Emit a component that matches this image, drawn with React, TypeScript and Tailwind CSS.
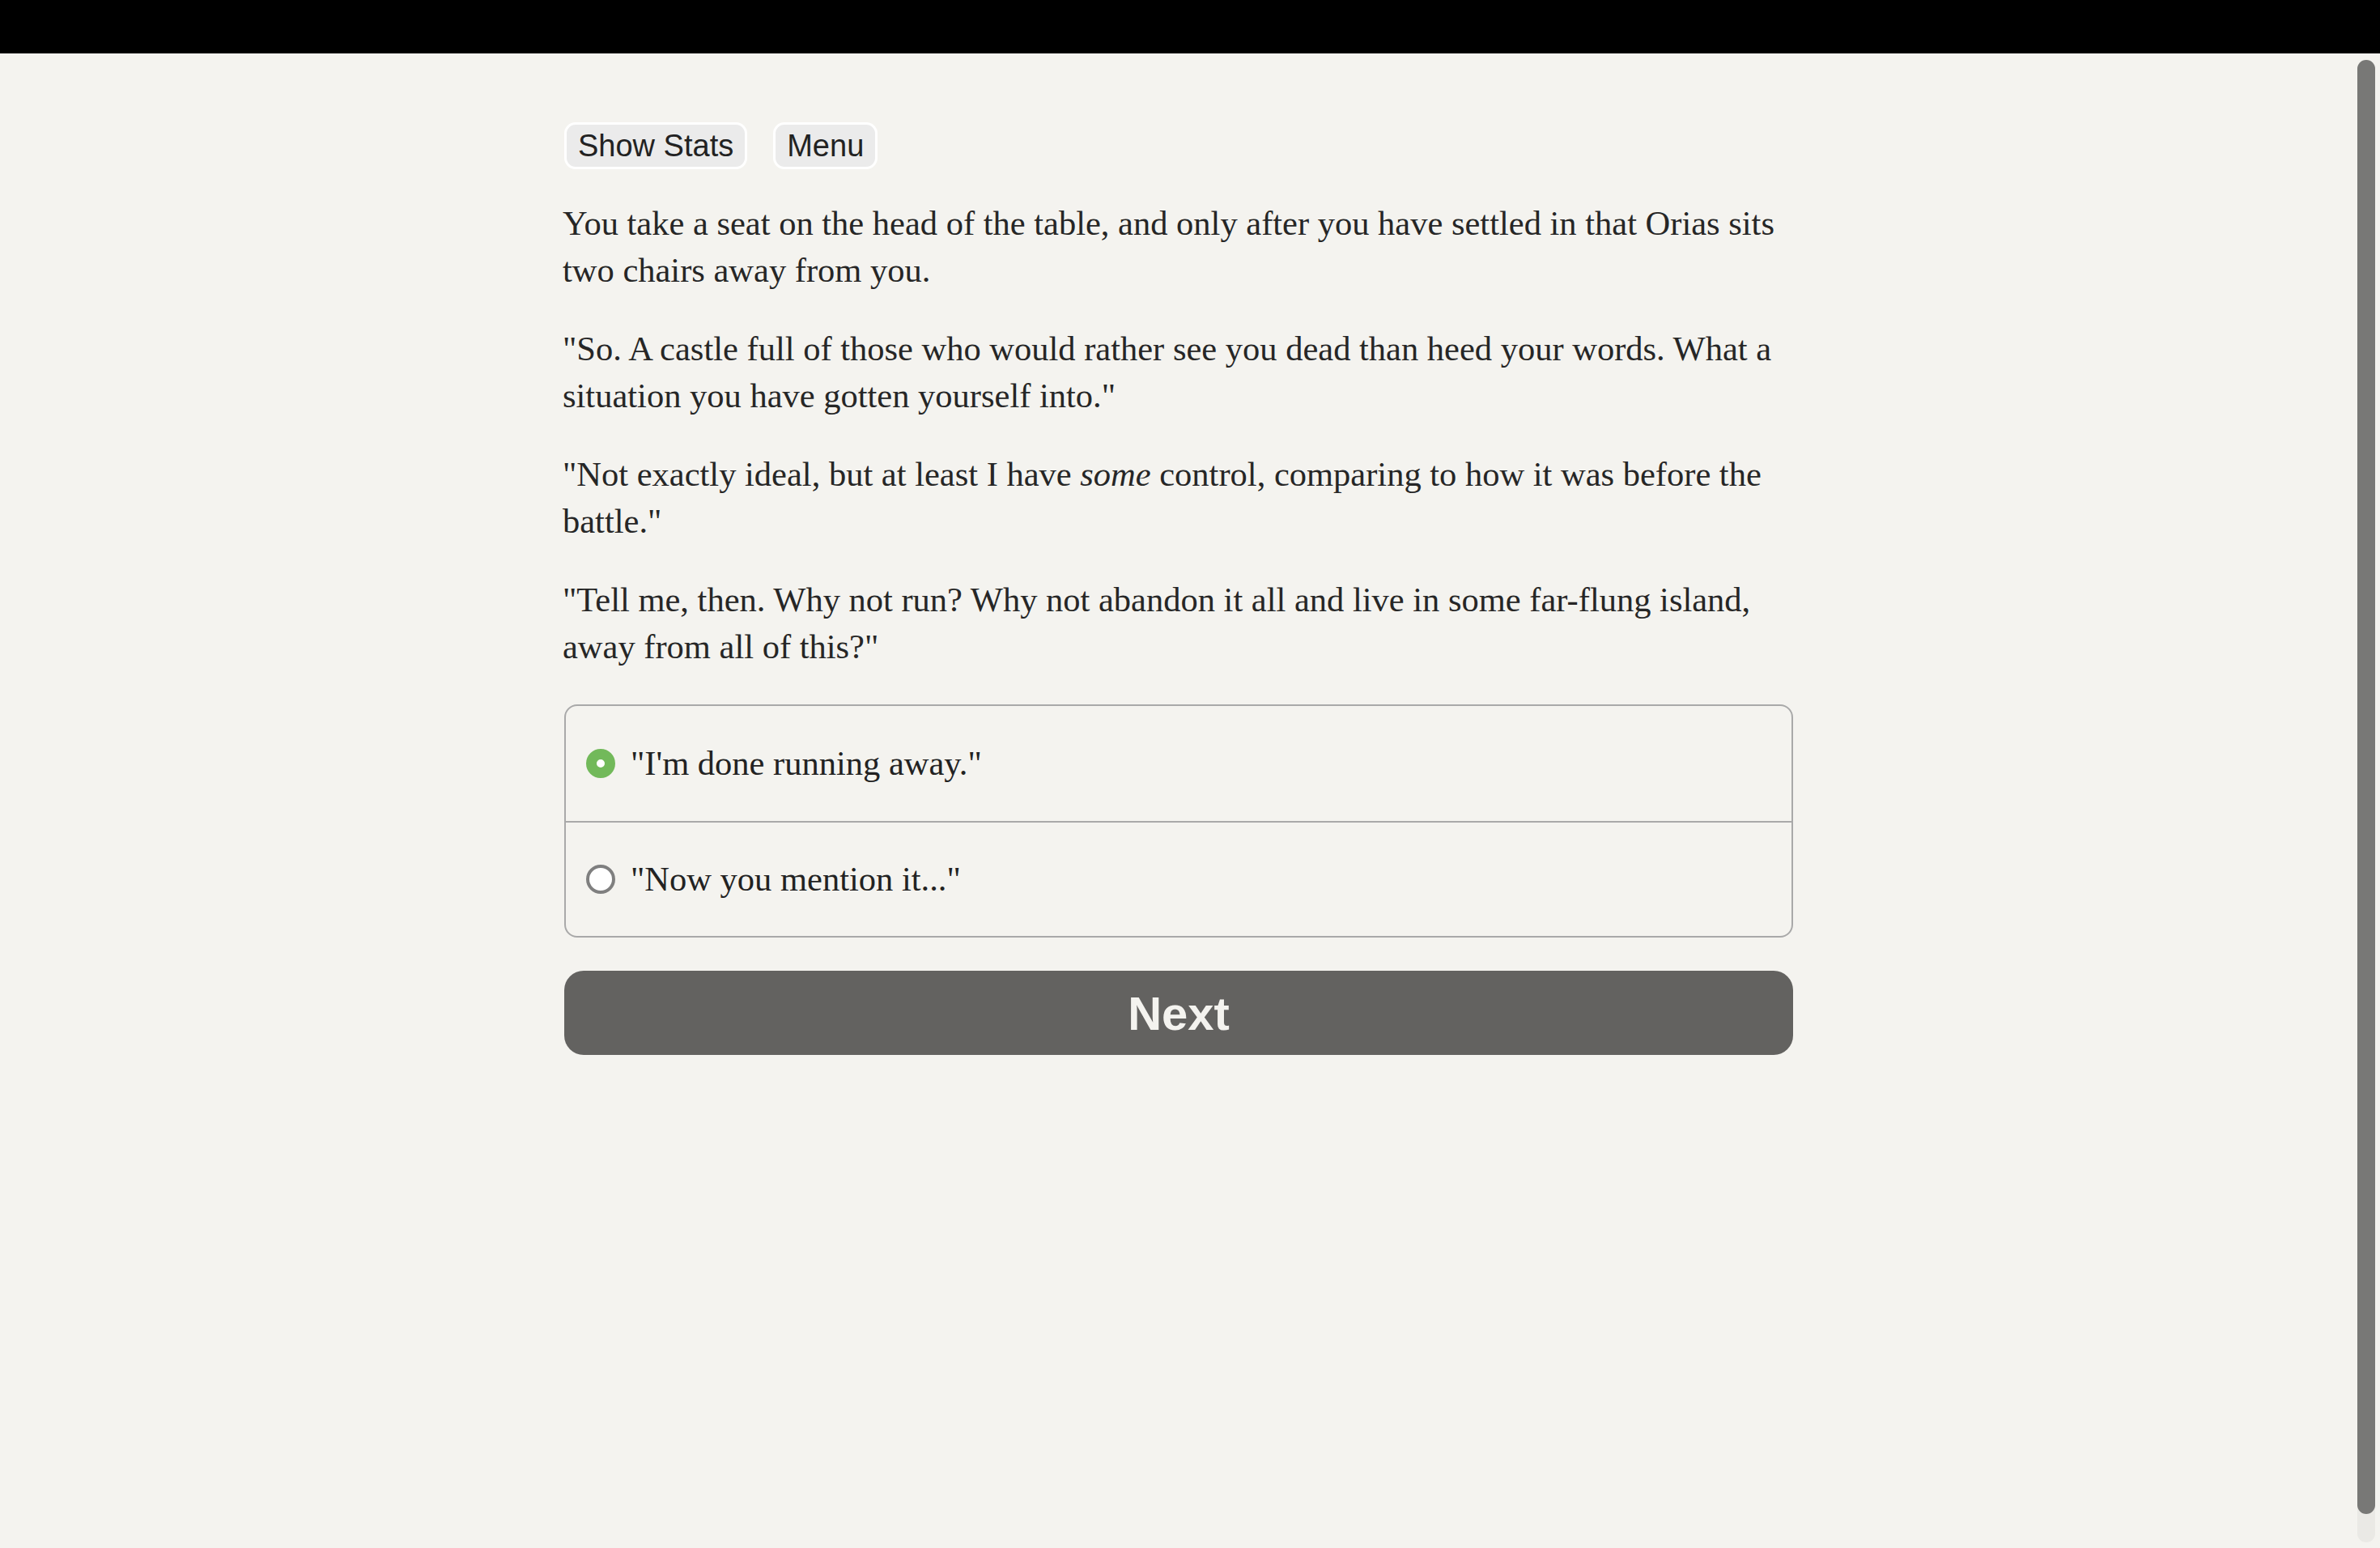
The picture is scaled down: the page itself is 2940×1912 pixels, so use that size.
import { useState } from "react";

const passages = [
  <>You take a seat on the head of the table, and only after you have settled in that Orias sits two chairs away from you.</>,
  <>"So. A castle full of those who would rather see you dead than heed your words. What a situation you have gotten yourself into."</>,
  <>
    "Not exactly ideal, but at least I have <i>some</i> control, comparing to how it was before the battle."
  </>,
  <>"Tell me, then. Why not run? Why not abandon it all and live in some far-flung island, away from all of this?"</>,
];

const choices = ['"I\'m done running away."', '"Now you mention it..."'];

const serif = "font-['Liberation_Serif','Times_New_Roman',serif]";
const sans = "font-['Liberation_Sans',Arial,sans-serif]";

const TopButton = ({ label }: { label: string }) => (
  <button
    className={`flex h-[58px] items-center rounded-[14px] border-[3px] border-white bg-[#ebebeb] px-[14px] text-[38px] leading-none text-[#222] ${sans}`}
  >
    {label}
  </button>
);

const Radio = ({ checked }: { checked: boolean }) =>
  checked ? (
    <span className="block h-9 w-9 shrink-0 rounded-full border-[13px] border-[#72b95a] bg-white" />
  ) : (
    <span className="block h-9 w-9 shrink-0 rounded-full border-4 border-[#7f7f7f] bg-white" />
  );

export default function App() {
  const [selected, setSelected] = useState(0);

  return (
    <div className="flex h-screen flex-col overflow-hidden bg-[#f4f3ef]">
      <div className="h-[66px] shrink-0 bg-black" />

      <div className="flex min-h-0 flex-1">
        <main className="flex-1">
          <div className="mx-auto w-[1520px] pt-[85px]">
            <div className="flex gap-8 pl-[2px]">
              <TopButton label="Show Stats" />
              <TopButton label="Menu" />
            </div>

            <div className={`mt-[38px] flex flex-col gap-[39px] text-[42.5px] leading-[58px] text-[#262626] ${serif}`}>
              {passages.map((p, i) => (
                <p key={i}>{p}</p>
              ))}
            </div>

            <div className="ml-[2px] mt-[42px] overflow-hidden rounded-[16px] border-2 border-[#a9a9a9]">
              {choices.map((c, i) => (
                <label
                  key={c}
                  onClick={() => setSelected(i)}
                  className={`flex h-[142px] cursor-pointer items-center gap-[19px] pl-[25px] text-[42.5px] text-[#222] ${serif} ${
                    i > 0 ? "border-t-2 border-[#a9a9a9]" : ""
                  }`}
                >
                  <Radio checked={selected === i} />
                  <span>{c}</span>
                </label>
              ))}
            </div>

            <button
              className={`ml-[2px] mt-[41px] flex h-[104px] w-[1518px] items-center justify-center rounded-[24px] bg-[#636260] text-[58px] font-bold text-[#f4f3ef] ${sans}`}
            >
              Next
            </button>
          </div>
        </main>

        {/* scrollbar */}
        <div className="flex w-[30px] shrink-0 pb-[7px] pl-[2px] pt-2">
          <div className="h-full w-[22px] rounded-full bg-[#eae9e5]">
            <div className="h-[1796px] rounded-full bg-[#787876]" />
          </div>
        </div>
      </div>
    </div>
  );
}
